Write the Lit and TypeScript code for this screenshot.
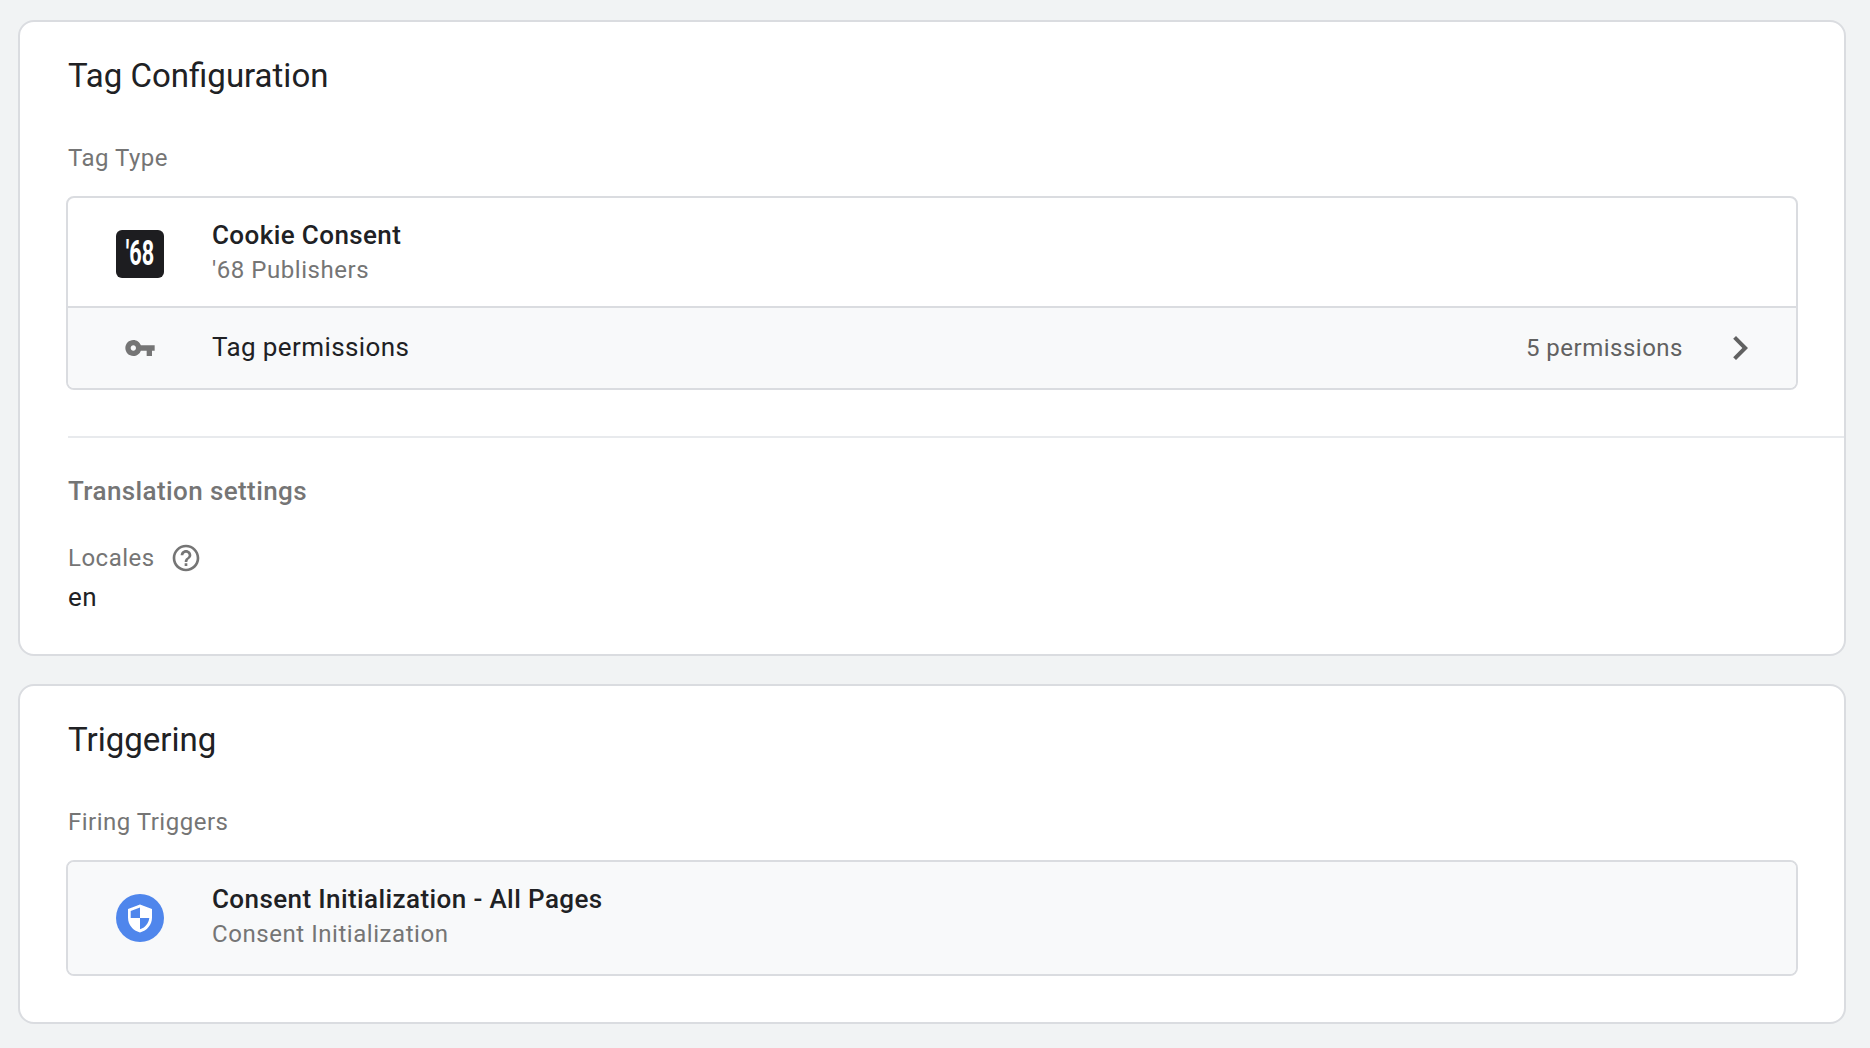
import { LitElement, css, html } from 'lit';
import { customElement } from 'lit/decorators.js';

const keyIcon = html`<svg viewBox="0 0 24 24" width="32" height="32" fill="#757575"><path d="M12.65 10C11.83 7.67 9.61 6 7 6c-3.31 0-6 2.69-6 6s2.69 6 6 6c2.61 0 4.83-1.67 5.65-4H17v4h4v-4h2v-4H12.65zM7 14c-1.1 0-2-.9-2-2s.9-2 2-2 2 .9 2 2-.9 2-2 2z"/></svg>`;

const chevron = html`<svg viewBox="0 0 24 24" width="48" height="48" fill="#616161"><path d="M10 6 8.59 7.41 13.17 12l-4.58 4.59L10 18l6-6z"/></svg>`;

const helpIcon = html`<svg viewBox="0 0 24 24" width="32" height="32" fill="#757575"><path d="M11 18h2v-2h-2v2zm1-16C6.48 2 2 6.48 2 12s4.48 10 10 10 10-4.48 10-10S17.52 2 12 2zm0 18c-4.41 0-8-3.59-8-8s3.59-8 8-8 8 3.59 8 8-3.59 8-8 8zm0-14c-2.21 0-4 1.79-4 4h2c0-1.1.9-2 2-2s2 .9 2 2c0 2-3 1.75-3 5h2c0-2.25 3-2.500 3-5 0-2.210-1.790-4-4-4z"/></svg>`;

const shieldIcon = html`<svg viewBox="0 0 48 48" width="48" height="48"><circle cx="24" cy="24" r="24" fill="#4f86ec"/><path fill="#fff" d="M24 10.500 12 15v8.600c0 7.200 5.100 13.300 12 14.900 6.900-1.600 12-7.700 12-14.900V15L24 10.500zm0 13.500h9.300c-.6 5.300-4.300 9.800-9.300 11.300V24H14.700v-7l9.300-3.500V24z"/></svg>`;

@customElement('app-root')
export class AppRoot extends LitElement {
  static styles = css`
    :host {
      display: block;
      box-sizing: border-box;
      height: 1048px;
      padding: 20px 24px 0 18px;
      background: #f1f3f4;
      font-family: Roboto, sans-serif;
      font-size: 24px;
      color: #202124;
      overflow: hidden;
    }

    .card {
      box-sizing: border-box;
      background: #fff;
      border: 2px solid #dadce0;
      border-radius: 16px;
      padding-left: 48px;
      margin-bottom: 28px;
    }

    .first {
      height: 636px;
    }

    .second {
      height: 340px;
    }

    h2 {
      margin: 0;
      padding-top: 32px;
      font-size: 33px;
      line-height: 44px;
      font-weight: 400;
    }

    .label {
      margin-top: 44px;
      font-size: 24px;
      line-height: 32px;
      letter-spacing: 0.5px;
      color: #757575;
    }

    .box {
      margin: 22px 46px 0 -2px;
      border: 2px solid #dadce0;
      border-radius: 8px;
      overflow: hidden;
    }

    .row {
      display: flex;
      align-items: center;
    }

    .tag {
      height: 108px;
    }

    .tag .slot {
      padding-top: 3px;
    }

    .tag .text {
      padding-top: 2px;
    }

    .trigger {
      height: 112px;
      background: #f8f9fa;
    }

    .trigger .text {
      padding-bottom: 3px;
    }

    .perm {
      height: 80px;
      background: #f8f9fa;
      border-top: 2px solid #dadce0;
    }

    .slot {
      flex: none;
      width: 144px;
      display: flex;
      justify-content: center;
    }

    .logo {
      width: 48px;
      height: 48px;
      border-radius: 6px;
      background: #1d1d20;
      color: #fff;
      display: flex;
      align-items: center;
      justify-content: center;
      font-size: 35px;
      font-weight: 700;
    }

    .logo span {
      display: inline-block;
      transform: scaleX(0.62);
    }

    .name {
      margin: -1px 0 1px;
      font-size: 26px;
      line-height: 34px;
      font-weight: 500;
      letter-spacing: 0.4px;
    }

    .sub {
      font-size: 24px;
      line-height: 34px;
      letter-spacing: 0.55px;
      color: #757575;
    }

    .perm-title {
      flex: 1;
      margin-top: -2px;
      font-size: 26px;
      letter-spacing: 0.4px;
    }

    .count {
      color: #616161;
      margin-right: 33px;
      letter-spacing: 0.5px;
    }

    .chev {
      display: flex;
      margin-right: 32px;
    }

    hr {
      margin: 46px 0 0;
      border: 0;
      height: 2px;
      background: #e8eaed;
    }

    .section {
      margin-top: 36px;
      font-size: 26px;
      line-height: 34px;
      font-weight: 500;
      letter-spacing: 0.4px;
      color: #757575;
    }

    .locale {
      display: flex;
      align-items: center;
      gap: 15px;
      margin-top: 34px;
    }

    .locale .label {
      margin: 0;
    }

    .locale svg {
      display: block;
    }

    .value {
      margin-top: 6px;
      line-height: 34px;
      font-size: 26px;
      letter-spacing: 0.4px;
    }
  `;

  render() {
    return html`
      <section class="card first">
        <h2>Tag Configuration</h2>
        <div class="label">Tag Type</div>
        <div class="box">
          <div class="row tag">
            <div class="slot"><div class="logo"><span>'68</span></div></div>
            <div class="text">
              <div class="name">Cookie Consent</div>
              <div class="sub">'68 Publishers</div>
            </div>
          </div>
          <div class="row perm">
            <div class="slot">${keyIcon}</div>
            <div class="perm-title">Tag permissions</div>
            <div class="count">5 permissions</div>
            <div class="chev">${chevron}</div>
          </div>
        </div>
        <hr />
        <div class="section">Translation settings</div>
        <div class="locale">
          <div class="label">Locales</div>
          ${helpIcon}
        </div>
        <div class="value">en</div>
      </section>
      <section class="card second">
        <h2>Triggering</h2>
        <div class="label">Firing Triggers</div>
        <div class="box">
          <div class="row trigger">
            <div class="slot">${shieldIcon}</div>
            <div class="text">
              <div class="name">Consent Initialization - All Pages</div>
              <div class="sub">Consent Initialization</div>
            </div>
          </div>
        </div>
      </section>
    `;
  }
}
